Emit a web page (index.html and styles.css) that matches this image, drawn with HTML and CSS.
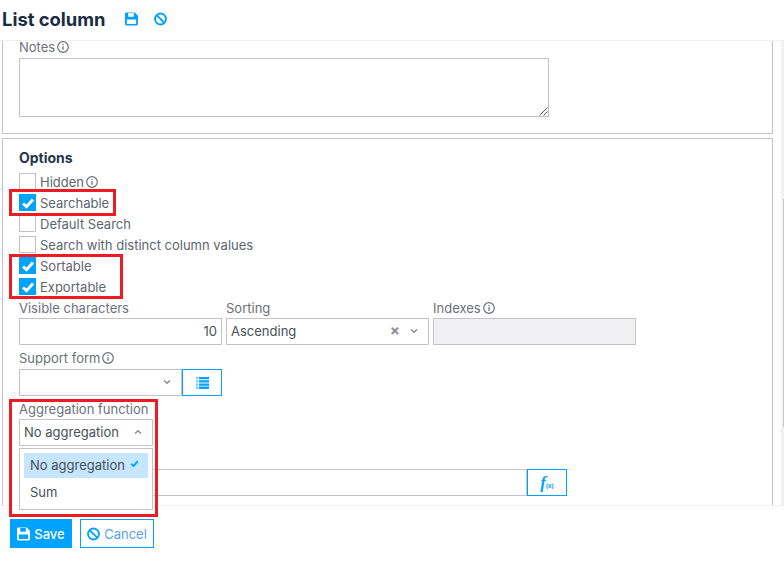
FILE: index.html
```html
<!DOCTYPE html>
<html lang="en">
<head>
<meta charset="utf-8">
<title>List column</title>
<link rel="stylesheet" href="styles.css">
</head>
<body>
<svg class="defs" width="0" height="0" aria-hidden="true">
  <symbol id="info" viewBox="0 0 12 12"><circle cx="6" cy="6" r="5.300" fill="none" stroke="currentColor" stroke-width="1.200"/><path d="M6 5.200v3.600M6 3v1.200" fill="none" stroke="currentColor" stroke-width="1.300"/></symbol>
  <symbol id="save" viewBox="0 0 14 14"><path fill="currentColor" fill-rule="evenodd" d="M1.500 0H10.500L14 3.500V12.500A1.500 1.500 0 0 1 12.500 14H1.500A1.500 1.500 0 0 1 0 12.500V1.500A1.500 1.500 0 0 1 1.500 0ZM3.500 0.500V4.500H9.500V0.500ZM2 7.500V12.500H12V7.500Z"/></symbol>
  <symbol id="ban" viewBox="0 0 14 14"><circle cx="7" cy="7" r="5.900" fill="none" stroke="currentColor" stroke-width="2"/><path d="M3 3L11 11" stroke="currentColor" stroke-width="2"/></symbol>
  <symbol id="tick" viewBox="0 0 14 14"><path d="M2 7.500L5.500 10.700L12 3.500" fill="none" stroke="currentColor" stroke-width="3"/></symbol>
  <symbol id="down" viewBox="0 0 8 6"><path d="M1 1.500L4 4.300L7 1.500" fill="none" stroke="currentColor" stroke-width="1.500"/></symbol>
  <symbol id="up" viewBox="0 0 8 6"><path d="M1 4.500L4 1.700L7 4.500" fill="none" stroke="currentColor" stroke-width="1.500"/></symbol>
</svg>
<div class="app">
  <header class="topbar">
    <h1 class="title">List column</h1>
    <svg class="head-icon"><use href="#save"/></svg>
    <svg class="head-icon"><use href="#ban"/></svg>
  </header>
  <main class="body">
    <div class="content">
      <section class="panel panel-notes">
        <label class="label">Notes<svg class="info"><use href="#info"/></svg></label>
        <div class="notes">
          <svg class="grip" width="10" height="10" viewBox="0 0 10 10"><path d="M9.500 1.500L1.500 9.500M9.500 5.500L5.500 9.500" stroke="#555" fill="none"/></svg>
        </div>
      </section>
      <section class="panel panel-options">
        <h2 class="heading">Options</h2>
        <div class="checks">
          <div class="check"><span class="box"></span>Hidden<svg class="info"><use href="#info"/></svg></div>
          <div class="check"><span class="box on"><svg class="tick"><use href="#tick"/></svg></span>Searchable</div>
          <div class="check"><span class="box"></span>Default Search</div>
          <div class="check"><span class="box"></span>Search with distinct column values</div>
          <div class="check"><span class="box on"><svg class="tick"><use href="#tick"/></svg></span>Sortable</div>
          <div class="check"><span class="box on"><svg class="tick"><use href="#tick"/></svg></span>Exportable</div>
        </div>
        <div class="fields">
          <div class="field">
            <label class="label">Visible characters</label>
            <div class="input num">10</div>
          </div>
          <div class="field">
            <label class="label">Sorting</label>
            <div class="input select">Ascending<span class="ctl"><span class="clear">×</span><svg class="caret"><use href="#down"/></svg></span></div>
          </div>
          <div class="field">
            <label class="label">Indexes<svg class="info"><use href="#info"/></svg></label>
            <div class="input disabled"></div>
          </div>
          <div class="field">
            <label class="label">Support form<svg class="info"><use href="#info"/></svg></label>
            <div class="group">
              <div class="input select grow"><span class="ctl"><svg class="caret"><use href="#down"/></svg></span></div>
              <button class="addon" type="button" aria-label="List">
                <svg width="13" height="12" viewBox="0 0 13 12"><path fill="currentColor" opacity=".55" d="M0 0h2v2.300H0zM0 3.200h2v2.300H0zM0 6.400h2v2.300H0zM0 9.600h2v2.300H0z"/><path fill="currentColor" d="M3 0H13v2.300H3zM3 3.200H13v2.300H3zM3 6.400H13v2.300H3zM3 9.600H13v2.300H3z"/></svg>
              </button>
            </div>
          </div>
        </div>
        <div class="aggregation">
          <label class="label">Aggregation function</label>
          <div class="input select">No aggregation<span class="ctl"><svg class="caret"><use href="#up"/></svg></span></div>
          <div class="menu">
            <div class="option selected">No aggregation<svg class="option-tick"><use href="#tick"/></svg></div>
            <div class="option">Sum</div>
          </div>
        </div>
        <div class="group formula">
          <div class="input grow"></div>
          <button class="addon fx" type="button"><i>f</i><small>(x)</small></button>
        </div>
      </section>
    </div>
    <div class="scrollbar"><span class="thumb"></span></div>
  </main>
  <footer class="footer">
    <button class="btn primary" type="button"><svg class="btn-icon"><use href="#save"/></svg>Save</button>
    <button class="btn outline" type="button"><svg class="btn-icon"><use href="#ban"/></svg>Cancel</button>
  </footer>
  <div class="mark mark-search"></div>
  <div class="mark mark-sort"></div>
  <div class="mark mark-agg"></div>
</div>
</body>
</html>
```
FILE: styles.css
```css
* { box-sizing: border-box; }
html, body { margin: 0; padding: 0; }
body {
  font-family: Inter, "Liberation Sans", sans-serif;
  font-size: 13px;
  line-height: 16px;
  color: #495057;
  background: #fff;
}
.defs { position: absolute; }
.app {
  position: relative;
  width: 784px;
  height: 561px;
  display: flex;
  flex-direction: column;
  overflow: hidden;
}
.topbar {
  height: 41px;
  flex: none;
  display: flex;
  align-items: center;
  padding-left: 2px;
  border-bottom: 1px solid #f0f0f0;
}
.title {
  margin: 0 19px 3px 0;
  font-size: 18.400px;
  line-height: 22px;
  font-weight: 700;
  color: #1c2b42;
}
.head-icon {
  width: 13px;
  height: 14px;
  margin-right: 16px;
  margin-bottom: 3px;
  color: #00a2ff;
}
.body {
  height: 464px;
  flex: none;
  display: flex;
}
.content {
  width: 781px;
  padding: 0 8px 0 2px;
}
.scrollbar {
  width: 3px;
  background: #f1f1f3;
}
.thumb {
  display: block;
  height: 228px;
  margin-top: 158px;
  margin-left: 2px;
  background: #c8c8cc;
}
.panel {
  border: 1px solid #c2c2c8;
  border-width: 0 1px 1px;
  padding: 0 16px 0;
}
.panel-notes { height: 93px; margin-bottom: 4px; }
.panel-options {
  border-width: 1px 1px 0;
  height: 367px;
}
.label {
  display: block;
  height: 16px;
  color: #6b7078;
  white-space: nowrap;
}
.panel-notes .label { height: 17px; line-height: 13px; }
.info {
  width: 12px;
  height: 12px;
  margin-left: 2px;
  vertical-align: -1px;
  color: #6b7078;
}
.notes {
  position: relative;
  width: 530px;
  height: 59px;
  border: 1px solid #c2c2c8;
}
.grip { position: absolute; right: 0; bottom: 0; }
.heading {
  margin: 11px 0 5px;
  font-size: 14px;
  line-height: 16px;
  font-weight: 700;
  color: #26374d;
}
.checks { display: flex; flex-direction: column; }
.check {
  height: 21px;
  display: flex;
  align-items: center;
  white-space: nowrap;
  color: #5e6570;
}
.box {
  width: 17px;
  height: 17px;
  flex: none;
  margin-right: 4px;
  border: 1px solid #c2c2c8;
  display: flex;
  align-items: center;
  justify-content: center;
}
.box.on { background: #00a2ff; border-color: #00a2ff; }
.tick { width: 14px; height: 14px; color: #fff; }
.fields {
  display: grid;
  grid-template-columns: 203px 203px 203px;
  column-gap: 4px;
  row-gap: 4px;
  margin-top: 2px;
}
.field .label { height: 19px; padding-top: 1px; }
.field .group { margin-top: 1px; }
.input {
  height: 27px;
  border: 1px solid #c2c2c8;
  display: flex;
  align-items: center;
  padding: 0 4px 2px;
  color: #495057;
  background: #fff;
}
.num { justify-content: flex-end; }
.disabled { background: #f0f0f2; }
.select { position: relative; }
.ctl {
  margin-left: auto;
  display: flex;
  align-items: center;
  gap: 10px;
  padding-right: 6px;
  color: #8a8f96;
}
.clear { font-size: 15px; line-height: 14px; font-weight: 700; color: #8a8f96; }
.caret { width: 8px; height: 6px; }
.group { display: flex; }
.grow { flex: 1; min-width: 0; }
.addon {
  width: 40px;
  height: 27px;
  flex: none;
  padding: 0;
  display: flex;
  align-items: center;
  justify-content: center;
  background: #fff;
  border: 1px solid #00a2ff;
  color: #00a2ff;
  font-family: inherit;
}
.aggregation {
  position: relative;
  width: 134px;
  margin-top: 4px;
}
.aggregation .label { height: 19px; padding-top: 1px; }
.menu {
  position: absolute;
  z-index: 2;
  left: 0;
  top: 48px;
  width: 134px;
  height: 62px;
  padding: 4px;
  background: #fff;
  border: 1px solid #c2c2c8;
}
.option {
  height: 25px;
  padding: 0 0 1px 6px;
  display: flex;
  align-items: center;
  color: #495057;
}
.option + .option { margin-top: 2px; }
.selected { background: #c5e6fd; }
.option-tick { width: 9px; height: 9px; margin-left: 5px; margin-bottom: 3px; color: #00a2ff; }
.formula { width: 548px; margin-top: 23px; }
.fx i { font-family: "Liberation Serif", serif; font-size: 17px; font-weight: 700; }
.fx small { font-size: 6px; line-height: 6px; margin-top: 6px; font-weight: 700; }
.footer {
  flex: 1;
  display: flex;
  align-items: flex-start;
  gap: 8px;
  padding: 13px 0 0 10px;
  border-top: 1px solid #f0f0f0;
}
.btn {
  height: 29px;
  display: flex;
  align-items: center;
  padding: 0;
  font-family: inherit;
  font-size: 13px;
  line-height: 16px;
}
.btn-icon { width: 13px; height: 14px; margin-right: 4px; }
.primary {
  width: 62px;
  justify-content: center;
  background: #00a2ff;
  border: 1px solid #00a2ff;
  color: #fff;
  font-weight: 500;
}
.outline {
  width: 74px;
  justify-content: center;
  background: #fff;
  border: 1px solid #00a2ff;
  color: #5c9ff0;
}
.outline .btn-icon { color: #00a2ff; }
.mark {
  position: absolute;
  z-index: 5;
  border: 3px solid #ed1c24;
  pointer-events: none;
}
.mark-search { left: 9px; top: 189px; width: 107px; height: 27px; }
.mark-sort { left: 9px; top: 254px; width: 114px; height: 45px; }
.mark-agg { left: 9px; top: 399px; width: 149px; height: 118px; }
```
